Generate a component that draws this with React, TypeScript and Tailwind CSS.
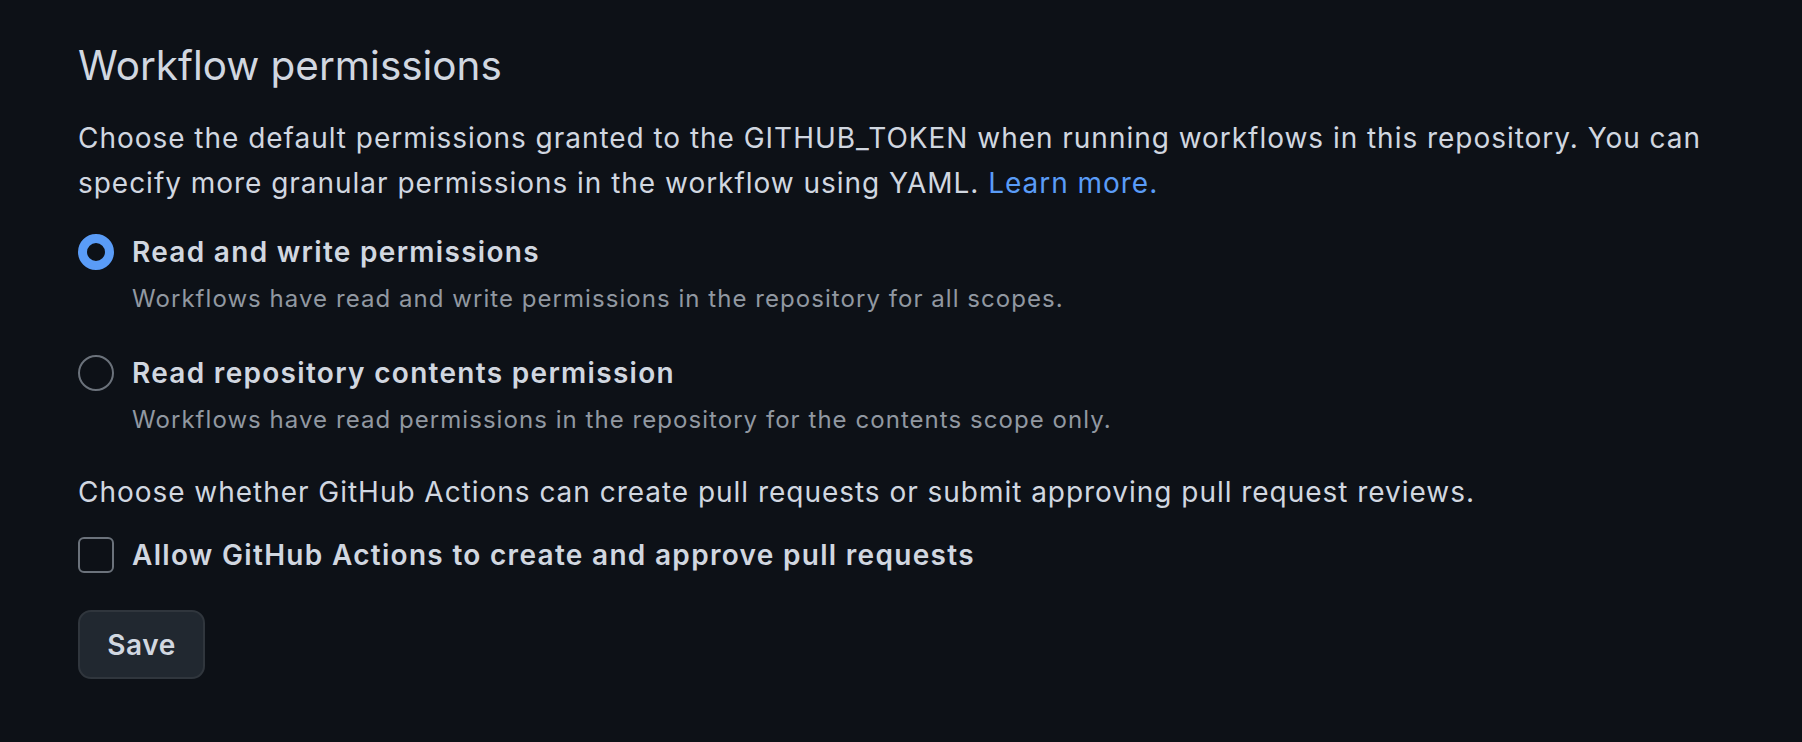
import React, { useState } from 'react';

const font = { fontFamily: 'Inter, "Noto Sans", sans-serif' };

interface RadioOptionProps {
  label: string;
  description: string;
  checked: boolean;
  onSelect: () => void;
}

const RadioOption: React.FC<RadioOptionProps> = ({ label, description, checked, onSelect }) => (
  <div className="flex flex-col">
    <label className="flex items-center gap-[18px] cursor-pointer" onClick={onSelect}>
      {checked ? (
        <span className="w-[36px] h-[36px] rounded-full border-[9px] border-[#5a9cf7] bg-[#0d1117] shrink-0" />
      ) : (
        <span className="w-[36px] h-[36px] rounded-full border-2 border-[#6b727b] shrink-0" />
      )}
      <span className="text-[28px] leading-[36px] font-semibold tracking-[1.3px] text-[#d1d7e0]">{label}</span>
    </label>
    <p className="mt-[11px] pl-[54px] text-[24px] leading-[36px] tracking-[1.05px] text-[#9198a1]">{description}</p>
  </div>
);

export default function App() {
  const [mode, setMode] = useState<'write' | 'read'>('write');
  const [allowPr, setAllowPr] = useState(false);

  return (
    <div className="min-h-screen w-full bg-[#0d1117] px-[78px] pt-[40px]" style={font}>
      <h2 className="text-[40.4px] leading-[52px] font-normal text-[#d1d7e0]">
        Workflow permissions
      </h2>

      <p className="mt-[24px] text-[28px] leading-[45px] tracking-[0.97px] text-[#d1d7e0]">
        Choose the default permissions granted to the GITHUB_TOKEN when running workflows in this repository. You can
        specify more granular permissions in the workflow using YAML.{' '}
        <a href="#" className="text-[#5a9cf7]">Learn more.</a>
      </p>

      <div className="mt-[28px] flex flex-col gap-[38px]">
        <RadioOption
          label="Read and write permissions"
          description="Workflows have read and write permissions in the repository for all scopes."
          checked={mode === 'write'}
          onSelect={() => setMode('write')}
        />
        <RadioOption
          label="Read repository contents permission"
          description="Workflows have read permissions in the repository for the contents scope only."
          checked={mode === 'read'}
          onSelect={() => setMode('read')}
        />
      </div>

      <p className="mt-[32px] text-[28px] leading-[45px] tracking-[0.97px] text-[#d1d7e0]">
        Choose whether GitHub Actions can create pull requests or submit approving pull request reviews.
      </p>

      <label className="mt-[22px] flex items-center gap-[18px] cursor-pointer" onClick={() => setAllowPr(!allowPr)}>
        <span
          className={
            allowPr
              ? 'w-[36px] h-[36px] rounded-[6px] bg-[#5a9cf7] shrink-0'
              : 'w-[36px] h-[36px] rounded-[6px] border-2 border-[#6b727b] shrink-0'
          }
        />
        <span className="text-[28px] leading-[36px] font-semibold tracking-[1.3px] text-[#d1d7e0]">
          Allow GitHub Actions to create and approve pull requests
        </span>
      </label>

      <button className="mt-[37px] w-[127px] h-[69px] rounded-[13px] border-2 border-[#30363d] bg-[#212830] text-[28px] font-semibold tracking-[0.6px] text-[#d1d7e0]">
        Save
      </button>
    </div>
  );
}
